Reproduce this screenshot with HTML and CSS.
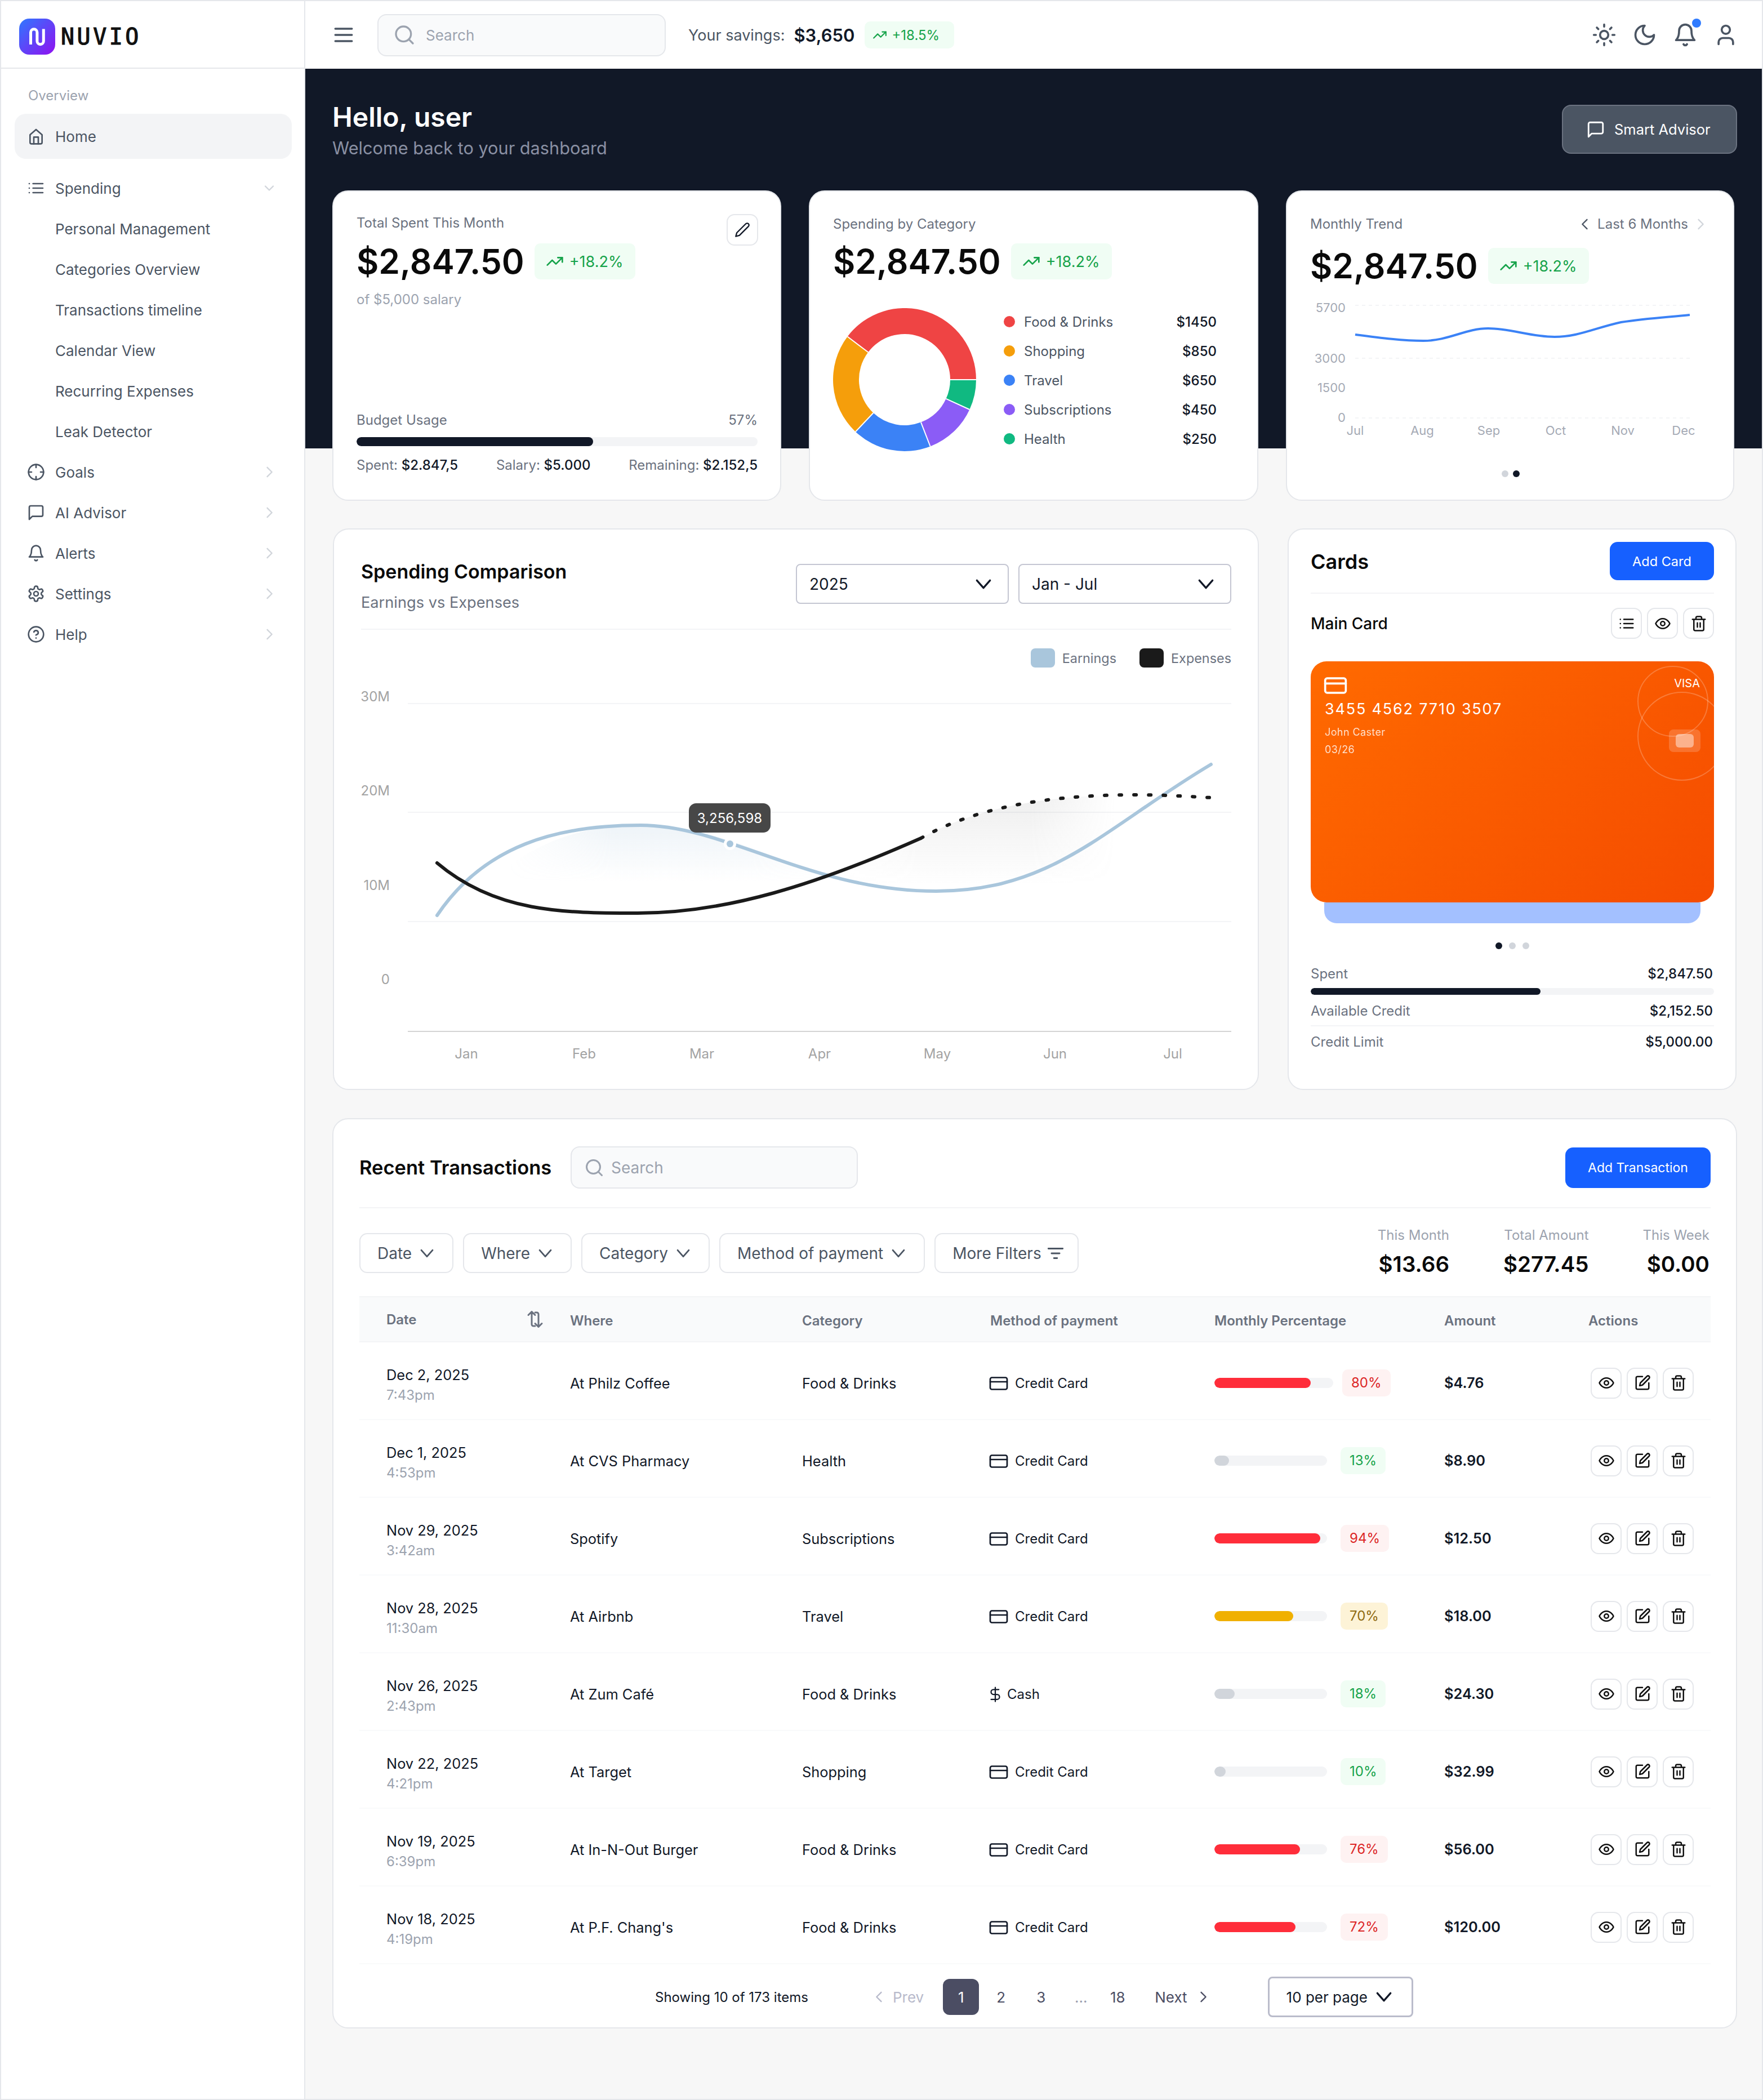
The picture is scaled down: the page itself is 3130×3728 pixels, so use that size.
FILE: index.html
```html
<!DOCTYPE html>
<html lang="en">
  <head>
    <meta charset="UTF-8" />
    <meta name="viewport" content="width=device-width, initial-scale=1.0" />
    <title>Nuvio Dashboard</title>
    <link rel="stylesheet" href="styles.css">
  </head>
  <body>
    <!-- Icon sprite -->
    <svg class="sprite" xmlns="http://www.w3.org/2000/svg">
      <symbol id="i-home" viewBox="0 0 24 24"><path d="M4 10l8-7 8 7v10a2 2 0 0 1-2 2H6a2 2 0 0 1-2-2z"/><path d="M9 22v-9h6v9"/></symbol>
      <symbol id="i-list" viewBox="0 0 24 24"><path d="M8 6h13M8 12h13M8 18h13M3 6h.01M3 12h.01M3 18h.01"/></symbol>
      <symbol id="i-down" viewBox="0 0 24 24"><path d="M6 9l6 6 6-6"/></symbol>
      <symbol id="i-chev" viewBox="0 0 24 24"><path d="M5 8l7 8 7-8"/></symbol>
      <symbol id="i-right" viewBox="0 0 24 24"><path d="M9 5l7 7-7 7"/></symbol>
      <symbol id="i-left" viewBox="0 0 24 24"><path d="M15 5l-7 7 7 7"/></symbol>
      <symbol id="i-goal" viewBox="0 0 24 24"><circle cx="12" cy="12" r="10"/><path d="M22 12h-4M6 12H2M12 6V2M12 22v-4"/></symbol>
      <symbol id="i-chat" viewBox="0 0 24 24"><path d="M21 15a2 2 0 0 1-2 2H7l-4 4V5a2 2 0 0 1 2-2h14a2 2 0 0 1 2 2z"/></symbol>
      <symbol id="i-bell" viewBox="0 0 24 24"><path d="M6 8a6 6 0 0 1 12 0c0 7 3 9 3 9H3s3-2 3-9"/><path d="M10.3 21a1.94 1.94 0 0 0 3.4 0"/></symbol>
      <symbol id="i-gear" viewBox="0 0 24 24"><path d="M12.22 2h-.44a2 2 0 0 0-2 2v.18a2 2 0 0 1-1 1.73l-.43.25a2 2 0 0 1-2 0l-.15-.08a2 2 0 0 0-2.73.73l-.22.38a2 2 0 0 0 .73 2.73l.15.1a2 2 0 0 1 1 1.72v.51a2 2 0 0 1-1 1.74l-.15.09a2 2 0 0 0-.73 2.73l.22.38a2 2 0 0 0 2.73.73l.15-.08a2 2 0 0 1 2 0l.43.25a2 2 0 0 1 1 1.73V20a2 2 0 0 0 2 2h.44a2 2 0 0 0 2-2v-.18a2 2 0 0 1 1-1.73l.43-.25a2 2 0 0 1 2 0l.15.08a2 2 0 0 0 2.73-.73l.22-.39a2 2 0 0 0-.73-2.73l-.15-.08a2 2 0 0 1-1-1.74v-.5a2 2 0 0 1 1-1.74l.15-.09a2 2 0 0 0 .73-2.73l-.22-.38a2 2 0 0 0-2.73-.73l-.15.08a2 2 0 0 1-2 0l-.43-.25a2 2 0 0 1-1-1.73V4a2 2 0 0 0-2-2z"/><circle cx="12" cy="12" r="3"/></symbol>
      <symbol id="i-help" viewBox="0 0 24 24"><circle cx="12" cy="12" r="10"/><path d="M9.09 9a3 3 0 0 1 5.83 1c0 2-3 3-3 3M12 17h.01"/></symbol>
      <symbol id="i-menu" viewBox="0 0 24 24"><path d="M4 6h16M4 12h16M4 18h16"/></symbol>
      <symbol id="i-search" viewBox="0 0 24 24"><circle cx="11" cy="11" r="8"/><path d="M21 21l-4.3-4.3"/></symbol>
      <symbol id="i-trend" viewBox="0 0 24 24"><path d="M22 7l-8.5 8.5-5-5L2 17"/><path d="M16 7h6v6"/></symbol>
      <symbol id="i-sun" viewBox="0 0 24 24"><circle cx="12" cy="12" r="4"/><path d="M12 2v2M12 20v2M4.93 4.93l1.41 1.41M17.66 17.66l1.41 1.41M2 12h2M20 12h2M6.34 17.66l-1.41 1.41M19.07 4.93l-1.41 1.41"/></symbol>
      <symbol id="i-moon" viewBox="0 0 24 24"><path d="M12 3a6 6 0 0 0 9 9 9 9 0 1 1-9-9z"/></symbol>
      <symbol id="i-user" viewBox="0 0 24 24"><circle cx="12" cy="7" r="4"/><path d="M19 21v-2a4 4 0 0 0-4-4H9a4 4 0 0 0-4 4v2"/></symbol>
      <symbol id="i-pencil" viewBox="0 0 24 24"><path d="M17 3a2.85 2.83 0 1 1 4 4L7.5 20.5 2 22l1.5-5.5z"/></symbol>
      <symbol id="i-card" viewBox="0 0 24 24"><rect x="2" y="5" width="20" height="14" rx="2"/><path d="M2 10h20"/></symbol>
      <symbol id="i-eye" viewBox="0 0 24 24"><path d="M2 12s3-7 10-7 10 7 10 7-3 7-10 7-10-7-10-7z"/><circle cx="12" cy="12" r="3"/></symbol>
      <symbol id="i-edit" viewBox="0 0 24 24"><path d="M12 3H5a2 2 0 0 0-2 2v14a2 2 0 0 0 2 2h14a2 2 0 0 0 2-2v-7"/><path d="M18.4 2.6a2.1 2.1 0 1 1 3 3L12 15l-4 1 1-4z"/></symbol>
      <symbol id="i-trash" viewBox="0 0 24 24"><path d="M3 6h18M19 6v14a2 2 0 0 1-2 2H7a2 2 0 0 1-2-2V6M8 6V4a2 2 0 0 1 2-2h4a2 2 0 0 1 2 2v2M10 11v6M14 11v6"/></symbol>
      <symbol id="i-filter" viewBox="0 0 24 24"><path d="M3 6h18M7 12h10M10 18h4"/></symbol>
      <symbol id="i-sort" viewBox="0 0 24 24"><path d="M4 7l4-4M8 3l4 4M8 3v15a2 2 0 0 0 2 2h2M20 17l-4 4M16 21l-4-4M16 21V6a2 2 0 0 0-2-2h-2"/></symbol>
      <symbol id="i-dollar" viewBox="0 0 24 24"><path d="M12 2v20M17 5H9.5a3.5 3.5 0 0 0 0 7h5a3.5 3.5 0 0 1 0 7H6"/></symbol>
    </svg>

    <div class="app">
      <!-- Sidebar -->
      <aside class="sidebar">
        <div class="logo">
          <svg class="logo-mark" viewBox="0 0 64 64">
            <defs>
              <linearGradient id="logoFill" x1="0" y1="0" x2="1" y2="1">
                <stop offset="0" stop-color="#2f78ff" />
                <stop offset="1" stop-color="#9010f0" />
              </linearGradient>
            </defs>
            <rect width="64" height="64" rx="18" fill="url(#logoFill)" />
            <path d="M20.500 46V24.500a5.700 5.700 0 0 1 11.400 0V40a5.700 5.700 0 0 0 11.400 0V18.500" fill="none" stroke="#fff" stroke-width="5" />
          </svg>
          <span class="logo-text">NUVIO</span>
        </div>
        <nav class="nav">
          <div class="nav-label">Overview</div>
          <a class="nav-item active"><svg class="ic ic-nav"><use href="#i-home" /></svg>Home</a>
          <a class="nav-item spaced"><svg class="ic ic-nav"><use href="#i-list" /></svg>Spending<svg class="ic nav-chev"><use href="#i-down" /></svg></a>
          <a class="nav-item sub">Personal Management</a>
          <a class="nav-item sub">Categories Overview</a>
          <a class="nav-item sub">Transactions timeline</a>
          <a class="nav-item sub">Calendar View</a>
          <a class="nav-item sub">Recurring Expenses</a>
          <a class="nav-item sub">Leak Detector</a>
          <a class="nav-item"><svg class="ic ic-nav"><use href="#i-goal" /></svg>Goals<svg class="ic nav-chev"><use href="#i-right" /></svg></a>
          <a class="nav-item"><svg class="ic ic-nav"><use href="#i-chat" /></svg>AI Advisor<svg class="ic nav-chev"><use href="#i-right" /></svg></a>
          <a class="nav-item"><svg class="ic ic-nav"><use href="#i-bell" /></svg>Alerts<svg class="ic nav-chev"><use href="#i-right" /></svg></a>
          <a class="nav-item"><svg class="ic ic-nav"><use href="#i-gear" /></svg>Settings<svg class="ic nav-chev"><use href="#i-right" /></svg></a>
          <a class="nav-item"><svg class="ic ic-nav"><use href="#i-help" /></svg>Help<svg class="ic nav-chev"><use href="#i-right" /></svg></a>
        </nav>
      </aside>

      <main class="main">
        <!-- Top bar -->
        <header class="topbar">
          <svg class="ic ic-menu"><use href="#i-menu" /></svg>
          <div class="search search-top">
            <svg class="ic ic-search"><use href="#i-search" /></svg>
            <span>Search</span>
          </div>
          <span class="savings-label">Your savings:</span>
          <span class="savings-value">$3,650</span>
          <span class="trend trend-small"><svg class="ic"><use href="#i-trend" /></svg>+18.5%</span>
          <div class="top-icons">
            <svg class="ic ic-top"><use href="#i-sun" /></svg>
            <svg class="ic ic-top"><use href="#i-moon" /></svg>
            <span class="bell-wrap"><svg class="ic ic-top"><use href="#i-bell" /></svg><span class="bell-dot"></span></span>
            <svg class="ic ic-top"><use href="#i-user" /></svg>
          </div>
        </header>

        <section class="hero">
          <div>
            <h1>Hello, user</h1>
            <p>Welcome back to your dashboard</p>
          </div>
          <button class="advisor-btn"><svg class="ic"><use href="#i-chat" /></svg>Smart Advisor</button>
        </section>

        <div class="content">
          <!-- Summary cards -->
          <div class="summary-row">
            <section class="card summary budget">
              <button class="edit-btn"><svg class="ic"><use href="#i-pencil" /></svg></button>
              <div class="card-label first">Total Spent This Month</div>
              <div class="amount-row">
                <span class="amount">$2,847.50</span>
                <span class="trend"><svg class="ic"><use href="#i-trend" /></svg>+18.2%</span>
              </div>
              <div class="salary-note">of $5,000 salary</div>
              <div class="budget-bottom">
                <div class="budget-head"><span>Budget Usage</span><span>57%</span></div>
                <div class="progress budget-bar"><div class="progress-fill budget-fill"></div></div>
                <div class="budget-foot">
                  <span>Spent: <b>$2.847,5</b></span>
                  <span>Salary: <b>$5.000</b></span>
                  <span>Remaining: <b>$2.152,5</b></span>
                </div>
              </div>
            </section>

            <section class="card summary">
              <div class="card-label">Spending by Category</div>
              <div class="amount-row">
                <span class="amount">$2,847.50</span>
                <span class="trend"><svg class="ic"><use href="#i-trend" /></svg>+18.2%</span>
              </div>
              <div class="category-body">
                <svg class="donut" viewBox="-127 -127 254 254">
                  <path fill="#ef4444" d="M127 0A127 127 0 0 0 -101.400 -76.500L-64.700 -48.800A81 81 0 0 1 81 0Z" />
                  <path fill="#f59e0b" d="M-101.400 -76.500A127 127 0 0 0 -87.100 92.400L-55.500 59A81 81 0 0 1 -64.700 -48.800Z" />
                  <path fill="#3b82f6" d="M-87.100 92.400A127 127 0 0 0 45.600 118.500L29 75.600A81 81 0 0 1 -55.500 59Z" />
                  <path fill="#8b5cf6" d="M45.600 118.500A127 127 0 0 0 115.400 53L73.600 33.800A81 81 0 0 1 29 75.600Z" />
                  <path fill="#10b981" d="M115.400 53A127 127 0 0 0 127 0L81 0A81 81 0 0 1 73.600 33.800Z" />
                  <g stroke="#fff" stroke-width="2">
                    <path d="M127 0H81M-101.400 -76.500L-64.700 -48.800M-87.100 92.400L-55.500 59M45.600 118.500L29 75.600M115.400 53L73.600 33.800" />
                  </g>
                </svg>
                <ul class="category-list">
                  <li><span class="dot dot-red"></span><span class="cat-name">Food &amp; Drinks</span><b>$1450</b></li>
                  <li><span class="dot dot-orange"></span><span class="cat-name">Shopping</span><b>$850</b></li>
                  <li><span class="dot dot-blue"></span><span class="cat-name">Travel</span><b>$650</b></li>
                  <li><span class="dot dot-purple"></span><span class="cat-name">Subscriptions</span><b>$450</b></li>
                  <li><span class="dot dot-green"></span><span class="cat-name">Health</span><b>$250</b></li>
                </ul>
              </div>
            </section>

            <section class="card summary trend-card">
              <div class="trend-head">
                <div class="card-label">Monthly Trend</div>
                <div class="period">
                  <svg class="ic period-prev"><use href="#i-left" /></svg>
                  <span>Last 6 Months</span>
                  <svg class="ic period-next"><use href="#i-right" /></svg>
                </div>
              </div>
              <div class="amount-row wide">
                <span class="amount">$2,847.50</span>
                <span class="trend"><svg class="ic"><use href="#i-trend" /></svg>+18.2%</span>
              </div>
              <svg class="mini-chart" viewBox="2324 520 720 260">
                <g class="mini-grid">
                  <path d="M2404 542H3000M2404 636H3000M2404 742H3000" />
                </g>
                <g class="mini-axis" text-anchor="end">
                  <text x="2387" y="554">5700</text>
                  <text x="2387" y="644">3000</text>
                  <text x="2387" y="696">1500</text>
                  <text x="2387" y="749">0</text>
                </g>
                <g class="mini-axis" text-anchor="middle">
                  <text x="2404" y="772">Jul</text>
                  <text x="2523" y="772">Aug</text>
                  <text x="2641" y="772">Sep</text>
                  <text x="2760" y="772">Oct</text>
                  <text x="2879" y="772">Nov</text>
                  <text x="2987" y="772">Dec</text>
                </g>
                <path class="mini-line" d="M2404 594C2450 600 2490 605 2525 605C2570 605 2600 583 2640 583C2680 583 2715 598 2758 598C2800 598 2830 582 2876 572C2920 565 2960 563 2998 559" />
              </svg>
              <div class="pager-dots">
                <span class="pdot"></span><span class="pdot on"></span>
              </div>
            </section>
          </div>

          <!-- Chart and cards -->
          <div class="middle-row">
            <section class="card chart-card">
              <div class="chart-head">
                <div>
                  <h2>Spending Comparison</h2>
                  <div class="chart-sub">Earnings vs Expenses</div>
                </div>
                <div class="chart-selects">
                  <div class="select">2025<svg class="ic"><use href="#i-chev" /></svg></div>
                  <div class="select">Jan - Jul<svg class="ic"><use href="#i-chev" /></svg></div>
                </div>
              </div>
              <div class="chart-legend">
                <span class="swatch swatch-earn"></span><span>Earnings</span>
                <span class="swatch swatch-exp"></span><span>Expenses</span>
              </div>
              <svg class="big-chart" viewBox="641 1190 1545 700">
                <defs>
                  <linearGradient id="blueFade" gradientUnits="userSpaceOnUse" x1="0" y1="1465" x2="0" y2="1565">
                    <stop offset="0" stop-color="#a9c6dc" stop-opacity="0.2" />
                    <stop offset="1" stop-color="#a9c6dc" stop-opacity="0" />
                  </linearGradient>
                  <linearGradient id="grayFade" gradientUnits="userSpaceOnUse" x1="0" y1="1420" x2="0" y2="1570">
                    <stop offset="0" stop-color="#8a8a8a" stop-opacity="0.14" />
                    <stop offset="1" stop-color="#8a8a8a" stop-opacity="0" />
                  </linearGradient>
                  <linearGradient id="sideFade" x1="0" y1="0" x2="1" y2="0">
                    <stop offset="0" stop-color="#000" />
                    <stop offset="0.3" stop-color="#fff" />
                    <stop offset="0.7" stop-color="#fff" />
                    <stop offset="1" stop-color="#000" />
                  </linearGradient>
                  <mask id="blueMask"><rect x="900" y="1440" width="620" height="160" fill="url(#sideFade)" /></mask>
                  <mask id="grayMask"><rect x="1480" y="1400" width="500" height="180" fill="url(#sideFade)" /></mask>
                </defs>
                <g class="big-grid">
                  <path d="M724 1249H2186M724 1442H2186M724 1636H2186" />
                </g>
                <path class="big-axis-line" d="M724 1831H2186" />
                <g class="big-axis" text-anchor="end">
                  <text x="692" y="1245">30M</text>
                  <text x="692" y="1412">20M</text>
                  <text x="692" y="1580">10M</text>
                  <text x="692" y="1747">0</text>
                </g>
                <g class="big-axis" text-anchor="middle">
                  <text x="828" y="1879">Jan</text>
                  <text x="1037" y="1879">Feb</text>
                  <text x="1246" y="1879">Mar</text>
                  <text x="1455" y="1879">Apr</text>
                  <text x="1664" y="1879">May</text>
                  <text x="1873" y="1879">Jun</text>
                  <text x="2082" y="1879">Jul</text>
                </g>
                <path fill="url(#blueFade)" mask="url(#blueMask)" d="M900 1540C980 1480 1060 1465 1137 1465C1290 1465 1400 1545 1520 1570V1600H900Z" />
                <path fill="url(#grayFade)" mask="url(#grayMask)" d="M1480 1553C1540 1520 1600 1508 1635 1488C1720 1440 1840 1411 2016 1411V1580H1480Z" />
                <path class="line-earn" d="M776 1625C860 1500 990 1465 1137 1465C1290 1465 1440 1582 1662 1582C1870 1582 1960 1470 2150 1357" />
                <path class="line-exp" d="M776 1532C880 1620 1000 1621 1132 1621C1290 1621 1450 1570 1635 1488" />
                <path class="line-exp dotted" d="M1635 1488C1720 1440 1840 1411 2016 1411C2070 1411 2110 1414 2150 1416" />
                <circle cx="1296" cy="1498" r="11" fill="#fff" />
                <circle cx="1296" cy="1498" r="6" fill="#a9c6dc" />
                <rect x="1223" y="1426" width="145" height="52" rx="13" fill="#474747" />
                <text class="tip-text" x="1295.500" y="1461" text-anchor="middle">3,256,598</text>
              </svg>
            </section>

            <section class="card cards-card">
              <div class="cards-head">
                <h2>Cards</h2>
                <button class="primary-btn add-card">Add Card</button>
              </div>
              <div class="main-card-row">
                <span>Main Card</span>
                <div class="icon-btns">
                  <button class="icon-btn"><svg class="ic"><use href="#i-list" /></svg></button>
                  <button class="icon-btn"><svg class="ic"><use href="#i-eye" /></svg></button>
                  <button class="icon-btn"><svg class="ic"><use href="#i-trash" /></svg></button>
                </div>
              </div>
              <div class="credit-card">
                <span class="ring ring-one"></span>
                <span class="ring ring-two"></span>
                <span class="visa">VISA</span>
                <span class="chip"><span class="chip-core"></span></span>
                <svg class="ic cc-icon"><use href="#i-card" /></svg>
                <div class="cc-number">3455 4562 7710 3507</div>
                <div class="cc-name">John Caster</div>
                <div class="cc-date">03/26</div>
              </div>
              <div class="card-back"></div>
              <div class="pager-dots card-dots">
                <span class="pdot on"></span><span class="pdot"></span><span class="pdot"></span>
              </div>
              <div class="credit-row first"><span>Spent</span><b>$2,847.50</b></div>
              <div class="progress credit-bar"><div class="progress-fill credit-fill"></div></div>
              <div class="credit-row divided"><span>Available Credit</span><b>$2,152.50</b></div>
              <div class="credit-row"><span>Credit Limit</span><b>$5,000.00</b></div>
            </section>
          </div>

          <!-- Transactions -->
          <section class="card tx-card">
            <div class="tx-head">
              <h2>Recent Transactions</h2>
              <div class="search search-tx">
                <svg class="ic ic-search"><use href="#i-search" /></svg>
                <span>Search</span>
              </div>
              <button class="primary-btn add-tx">Add Transaction</button>
            </div>

            <div class="tx-tools">
              <div class="filters">
                <button class="filter">Date<svg class="ic"><use href="#i-chev" /></svg></button>
                <button class="filter">Where<svg class="ic"><use href="#i-chev" /></svg></button>
                <button class="filter">Category<svg class="ic"><use href="#i-chev" /></svg></button>
                <button class="filter">Method of payment<svg class="ic"><use href="#i-chev" /></svg></button>
                <button class="filter filter-more">More Filters<svg class="ic"><use href="#i-filter" /></svg></button>
              </div>
              <div class="tx-stats">
                <div class="tx-stat"><span>This Month</span><b>$13.66</b></div>
                <div class="tx-stat"><span>Total Amount</span><b>$277.45</b></div>
                <div class="tx-stat"><span>This Week</span><b>$0.00</b></div>
              </div>
            </div>

            <div class="tx-table">
              <div class="tx-row tx-header">
                <div class="col-date">Date<svg class="ic ic-sort"><use href="#i-sort" /></svg></div>
                <div>Where</div>
                <div>Category</div>
                <div>Method of payment</div>
                <div>Monthly Percentage</div>
                <div>Amount</div>
                <div>Actions</div>
              </div>

              <div class="tx-row">
                <div class="date-cell">Dec 2, 2025<small>7:43pm</small></div>
                <div>At Philz Coffee</div>
                <div>Food &amp; Drinks</div>
                <div class="method"><svg class="ic"><use href="#i-card" /></svg>Credit Card</div>
                <div class="pct"><div class="track track-wide"><div class="track-fill red" style="width: 81%"></div></div><span class="pct-badge bad">80%</span></div>
                <div class="tx-amount">$4.76</div>
                <div class="actions"><button class="icon-btn"><svg class="ic"><use href="#i-eye" /></svg></button><button class="icon-btn"><svg class="ic"><use href="#i-edit" /></svg></button><button class="icon-btn"><svg class="ic"><use href="#i-trash" /></svg></button></div>
              </div>
              <div class="tx-row">
                <div class="date-cell">Dec 1, 2025<small>4:53pm</small></div>
                <div>At CVS Pharmacy</div>
                <div>Health</div>
                <div class="method"><svg class="ic"><use href="#i-card" /></svg>Credit Card</div>
                <div class="pct"><div class="track"><div class="track-fill gray" style="width: 13%"></div></div><span class="pct-badge good">13%</span></div>
                <div class="tx-amount">$8.90</div>
                <div class="actions"><button class="icon-btn"><svg class="ic"><use href="#i-eye" /></svg></button><button class="icon-btn"><svg class="ic"><use href="#i-edit" /></svg></button><button class="icon-btn"><svg class="ic"><use href="#i-trash" /></svg></button></div>
              </div>
              <div class="tx-row">
                <div class="date-cell">Nov 29, 2025<small>3:42am</small></div>
                <div>Spotify</div>
                <div>Subscriptions</div>
                <div class="method"><svg class="ic"><use href="#i-card" /></svg>Credit Card</div>
                <div class="pct"><div class="track"><div class="track-fill red" style="width: 94%"></div></div><span class="pct-badge bad">94%</span></div>
                <div class="tx-amount">$12.50</div>
                <div class="actions"><button class="icon-btn"><svg class="ic"><use href="#i-eye" /></svg></button><button class="icon-btn"><svg class="ic"><use href="#i-edit" /></svg></button><button class="icon-btn"><svg class="ic"><use href="#i-trash" /></svg></button></div>
              </div>
              <div class="tx-row">
                <div class="date-cell">Nov 28, 2025<small>11:30am</small></div>
                <div>At Airbnb</div>
                <div>Travel</div>
                <div class="method"><svg class="ic"><use href="#i-card" /></svg>Credit Card</div>
                <div class="pct"><div class="track"><div class="track-fill amber" style="width: 70%"></div></div><span class="pct-badge warn">70%</span></div>
                <div class="tx-amount">$18.00</div>
                <div class="actions"><button class="icon-btn"><svg class="ic"><use href="#i-eye" /></svg></button><button class="icon-btn"><svg class="ic"><use href="#i-edit" /></svg></button><button class="icon-btn"><svg class="ic"><use href="#i-trash" /></svg></button></div>
              </div>
              <div class="tx-row">
                <div class="date-cell">Nov 26, 2025<small>2:43pm</small></div>
                <div>At Zum Café</div>
                <div>Food &amp; Drinks</div>
                <div class="method method-cash"><svg class="ic"><use href="#i-dollar" /></svg>Cash</div>
                <div class="pct"><div class="track"><div class="track-fill gray" style="width: 18%"></div></div><span class="pct-badge good">18%</span></div>
                <div class="tx-amount">$24.30</div>
                <div class="actions"><button class="icon-btn"><svg class="ic"><use href="#i-eye" /></svg></button><button class="icon-btn"><svg class="ic"><use href="#i-edit" /></svg></button><button class="icon-btn"><svg class="ic"><use href="#i-trash" /></svg></button></div>
              </div>
              <div class="tx-row">
                <div class="date-cell">Nov 22, 2025<small>4:21pm</small></div>
                <div>At Target</div>
                <div>Shopping</div>
                <div class="method"><svg class="ic"><use href="#i-card" /></svg>Credit Card</div>
                <div class="pct"><div class="track"><div class="track-fill gray" style="width: 10%"></div></div><span class="pct-badge good">10%</span></div>
                <div class="tx-amount">$32.99</div>
                <div class="actions"><button class="icon-btn"><svg class="ic"><use href="#i-eye" /></svg></button><button class="icon-btn"><svg class="ic"><use href="#i-edit" /></svg></button><button class="icon-btn"><svg class="ic"><use href="#i-trash" /></svg></button></div>
              </div>
              <div class="tx-row">
                <div class="date-cell">Nov 19, 2025<small>6:39pm</small></div>
                <div>At In-N-Out Burger</div>
                <div>Food &amp; Drinks</div>
                <div class="method"><svg class="ic"><use href="#i-card" /></svg>Credit Card</div>
                <div class="pct"><div class="track"><div class="track-fill red" style="width: 76%"></div></div><span class="pct-badge bad">76%</span></div>
                <div class="tx-amount">$56.00</div>
                <div class="actions"><button class="icon-btn"><svg class="ic"><use href="#i-eye" /></svg></button><button class="icon-btn"><svg class="ic"><use href="#i-edit" /></svg></button><button class="icon-btn"><svg class="ic"><use href="#i-trash" /></svg></button></div>
              </div>
              <div class="tx-row">
                <div class="date-cell">Nov 18, 2025<small>4:19pm</small></div>
                <div>At P.F. Chang's</div>
                <div>Food &amp; Drinks</div>
                <div class="method"><svg class="ic"><use href="#i-card" /></svg>Credit Card</div>
                <div class="pct"><div class="track"><div class="track-fill red" style="width: 72%"></div></div><span class="pct-badge bad">72%</span></div>
                <div class="tx-amount">$120.00</div>
                <div class="actions"><button class="icon-btn"><svg class="ic"><use href="#i-eye" /></svg></button><button class="icon-btn"><svg class="ic"><use href="#i-edit" /></svg></button><button class="icon-btn"><svg class="ic"><use href="#i-trash" /></svg></button></div>
              </div>
            </div>

            <div class="tx-foot">
              <span class="showing">Showing 10 of 173 items</span>
              <div class="pagination">
                <span class="pg-prev"><svg class="ic"><use href="#i-left" /></svg>Prev</span>
                <span class="pg active">1</span>
                <span class="pg">2</span>
                <span class="pg">3</span>
                <span class="pg muted">...</span>
                <span class="pg pg-last">18</span>
                <span class="pg-next">Next<svg class="ic"><use href="#i-right" /></svg></span>
              </div>
              <div class="select per-page">10 per page<svg class="ic"><use href="#i-chev" /></svg></div>
            </div>
          </section>
        </div>
      </main>
    </div>
  </body>
</html>
```

FILE: styles.css
```css
* {
  box-sizing: border-box;
}

body {
  margin: 0;
  font-family: "Inter", "Liberation Sans", sans-serif;
  color: #111827;
  background-color: #f7f7f7;
}

h1,
h2,
p,
ul {
  margin: 0;
  padding: 0;
}

button {
  font-family: inherit;
  cursor: pointer;
}

.sprite {
  display: none;
}

.ic {
  fill: none;
  stroke: currentColor;
  stroke-width: 2;
  stroke-linecap: round;
  stroke-linejoin: round;
  flex-shrink: 0;
}

.app {
  display: flex;
  width: 3130px;
  height: 3728px;
  border: 2px solid #e5e7eb;
}

/* Sidebar */
.sidebar {
  width: 540px;
  flex-shrink: 0;
  background-color: #fff;
  border-right: 2px solid #e5e7eb;
}

.logo {
  display: flex;
  align-items: center;
  height: 120px;
  padding: 8px 0 0 32px;
  gap: 10px;
  border-bottom: 2px solid #e5e7eb;
}

.logo-mark {
  width: 64px;
  height: 64px;
}

.logo-text {
  font-family: "DejaVu Sans Mono", monospace;
  font-size: 40px;
  letter-spacing: 4.500px;
  color: #111;
  -webkit-text-stroke: 1.200px #111;
}

.nav {
  padding: 33px 0 0;
}

.nav-label {
  height: 30px;
  line-height: 30px;
  padding-left: 48px;
  font-size: 24px;
  color: #9ca3af;
  margin-bottom: 17px;
}

.nav-item {
  display: flex;
  align-items: center;
  height: 72px;
  padding-left: 46px;
  padding-right: 48px;
  font-size: 26px;
  color: #4b5563;
  gap: 17px;
}

.nav-item.active {
  height: 80px;
  margin: 0 22px 0 24px;
  padding-left: 22px;
  background-color: #f3f4f6;
  border-radius: 20px;
}

.nav-item.spaced {
  margin-top: 16px;
}

.nav-item.sub {
  padding-left: 96px;
}

.ic-nav {
  width: 32px;
  height: 32px;
  margin-right: 1px;
}

.nav-chev {
  width: 28px;
  height: 28px;
  margin-left: auto;
  color: #d1d5db;
}

/* Main */
.main {
  flex: 1;
  min-width: 0;
}

.topbar {
  display: flex;
  align-items: center;
  height: 120px;
  padding: 0 42px 0 46px;
  background-color: #fff;
}

.ic-menu {
  width: 44px;
  height: 44px;
  margin-right: 38px;
  color: #4b5563;
}

.search {
  display: flex;
  align-items: center;
  height: 75px;
  background-color: #f9fafb;
  border: 2px solid #e5e7eb;
  border-radius: 16px;
  font-size: 26px;
  color: #9ca3af;
}

.search-top {
  width: 512px;
  padding-left: 26px;
  gap: 18px;
  margin-right: 40px;
}

.ic-search {
  width: 40px;
  height: 40px;
}

.savings-label {
  font-size: 27px;
  color: #4b5563;
  margin-right: 16px;
}

.savings-value {
  font-size: 31px;
  font-weight: 600;
  margin-right: 18px;
}

.trend {
  display: inline-flex;
  align-items: center;
  gap: 10px;
  height: 64px;
  padding: 0 22px 0 20px;
  background-color: #f0fdf4;
  border-radius: 10px;
  font-size: 27px;
  color: #16a34a;
}

.trend svg {
  width: 32px;
  height: 32px;
}

.trend-small {
  height: 48px;
  padding: 0 26px 0 14px;
  gap: 8px;
  font-size: 24px;
}

.trend-small svg {
  width: 26px;
  height: 26px;
}

.top-icons {
  display: flex;
  align-items: center;
  gap: 28px;
  margin-left: auto;
  color: #4b5563;
}

.ic-top {
  display: block;
  width: 44px;
  height: 44px;
}

.bell-wrap {
  position: relative;
  display: block;
}

.bell-dot {
  position: absolute;
  top: -7px;
  right: -6px;
  width: 16px;
  height: 16px;
  border-radius: 50%;
  background-color: #2f7bff;
}

/* Hero */
.hero {
  display: flex;
  justify-content: space-between;
  align-items: flex-start;
  height: 674px;
  padding: 58px 44px 0 48px;
  background-color: #111827;
}

.hero h1 {
  font-size: 48px;
  line-height: 56px;
  font-weight: 600;
  color: #fff;
}

.hero p {
  margin-top: 7px;
  font-size: 30.700px;
  line-height: 40px;
  color: #8a90a3;
}

.advisor-btn {
  display: flex;
  align-items: center;
  gap: 16px;
  width: 311px;
  height: 87px;
  margin-top: 6px;
  padding-left: 41px;
  background-color: #4b5563;
  border: 2px solid #6b7280;
  border-radius: 16px;
  font-size: 25.500px;
  color: #fff;
}

.advisor-btn svg {
  width: 34px;
  height: 34px;
}

.content {
  margin-top: -458px;
  padding: 0 44px 0 48px;
}

/* Cards */
.card {
  position: relative;
  background-color: #fff;
  border: 2px solid #e5e7eb;
  border-radius: 28px;
}

.summary-row {
  display: grid;
  grid-template-columns: 797px 798px 796px;
  grid-template-rows: 551px;
  column-gap: 49px;
}

.summary {
  display: flex;
  flex-direction: column;
  padding: 44px 40px 47px 41px;
}

.card-label {
  font-size: 24px;
  line-height: 28px;
  color: #6b7280;
}

.card-label.first {
  margin-top: -2px;
}

.amount-row {
  display: flex;
  align-items: center;
  gap: 18px;
  margin-top: 20px;
}

.amount-row.wide {
  margin-top: 28px;
}

.amount {
  font-size: 60.500px;
  line-height: 64px;
  font-weight: 600;
  color: #0a0a0a;
}

.budget .amount-row {
  margin-top: 22px;
}

.salary-note {
  margin-top: 22px;
  font-size: 24px;
  line-height: 28px;
  color: #9ca3af;
}

.edit-btn {
  position: absolute;
  top: 40px;
  right: 39px;
  width: 56px;
  height: 56px;
  padding: 0;
  display: flex;
  align-items: center;
  justify-content: center;
  background-color: #fff;
  border: 2px solid #e5e7eb;
  border-radius: 14px;
  color: #111827;
}

.edit-btn svg {
  width: 28px;
  height: 28px;
}

.budget-bottom {
  margin-top: auto;
}

.budget-head,
.budget-foot {
  display: flex;
  justify-content: space-between;
  font-size: 24px;
  line-height: 28px;
  color: #6b7280;
}

.budget-foot {
  margin-top: 20px;
}

.budget-foot b {
  font-weight: 500;
  color: #111827;
}

.progress {
  background-color: #f3f4f6;
  border-radius: 8px;
  overflow: hidden;
}

.progress-fill {
  height: 100%;
  background-color: #111827;
  border-radius: 8px;
}

.budget-bar {
  height: 16px;
  margin-top: 16px;
}

.budget-fill {
  width: 59%;
}

.category-body {
  display: flex;
  margin-top: 51px;
  gap: 49px;
}

.donut {
  width: 254px;
  height: 254px;
  flex-shrink: 0;
}

.category-list {
  list-style: none;
  width: 378px;
  margin-top: -2px;
}

.category-list li {
  display: flex;
  align-items: center;
  height: 52px;
  font-size: 24px;
}

.category-list b {
  margin-left: auto;
  font-weight: 500;
}

.cat-name {
  margin-left: 16px;
  color: #4b5563;
}

.dot {
  width: 20px;
  height: 20px;
  border-radius: 50%;
}

.dot-red { background-color: #ef4444; }
.dot-orange { background-color: #f59e0b; }
.dot-blue { background-color: #3b82f6; }
.dot-purple { background-color: #8b5cf6; }
.dot-green { background-color: #10b981; }

.trend-head {
  display: flex;
  justify-content: space-between;
  align-items: center;
}

.period {
  display: flex;
  align-items: center;
  gap: 8px;
  font-size: 24px;
  line-height: 28px;
  color: #6b7280;
  margin-right: 4px;
}

.period svg {
  width: 28px;
  height: 28px;
}

.period-prev {
  color: #4b5563;
}

.period-next {
  color: #d1d5db;
}

.mini-chart {
  display: block;
  flex-shrink: 0;
  width: 720px;
  height: 260px;
  margin-top: 16px;
}

.mini-grid path {
  fill: none;
  stroke: #f3f4f6;
  stroke-width: 2;
  stroke-dasharray: 6 6;
}

.mini-axis {
  font-size: 22px;
  fill: #a5aab5;
}

.mini-line {
  fill: none;
  stroke: #3b82f6;
  stroke-width: 4;
}

.pager-dots {
  display: flex;
  flex-shrink: 0;
  justify-content: center;
  gap: 8px;
  margin-top: 55px;
}

.pdot {
  width: 12px;
  height: 12px;
  border-radius: 50%;
  background-color: #d1d5db;
}

.pdot.on {
  background-color: #111827;
}

.middle-row {
  display: grid;
  grid-template-columns: 1644px 797px;
  grid-template-rows: 997px;
  column-gap: 51px;
  margin-top: 49px;
  margin-left: 1px;
}

/* Chart card */
.chart-card {
  padding: 53px 47px 0 48px;
}

.chart-head {
  display: flex;
  justify-content: space-between;
  align-items: flex-start;
  padding-bottom: 26px;
  border-bottom: 2px solid #f3f4f6;
}

.chart-card h2 {
  font-size: 34px;
  line-height: 44px;
  font-weight: 600;
  color: #0a0a0a;
}

.chart-sub {
  margin-top: 13px;
  font-size: 27.200px;
  line-height: 40px;
  color: #6b7280;
}

.chart-selects {
  display: flex;
  gap: 17px;
  margin-top: 8px;
}

.select {
  display: flex;
  align-items: center;
  justify-content: space-between;
  width: 378px;
  height: 71px;
  padding: 0 23px 0 22px;
  background-color: #fff;
  border: 2px solid #c4c6d2;
  border-radius: 8px;
  font-size: 28px;
  color: #111827;
}

.select svg {
  width: 40px;
  height: 40px;
}

.chart-legend {
  display: flex;
  justify-content: flex-end;
  align-items: center;
  height: 34px;
  margin-top: 33px;
  font-size: 23.400px;
  color: #6b7280;
}

.swatch {
  width: 43px;
  height: 34px;
  border-radius: 8px;
  margin-right: 13px;
}

.swatch-earn {
  background-color: #a9c6dc;
}

.swatch-exp {
  margin-left: 41px;
  background-color: #1a1a1a;
}

.big-chart {
  display: block;
  width: 1545px;
  height: 700px;
  margin-top: 5px;
}

.big-grid path {
  fill: none;
  stroke: #f3f4f6;
  stroke-width: 2;
}

.big-axis-line {
  fill: none;
  stroke: #d4d4d4;
  stroke-width: 2;
}

.big-axis {
  font-size: 24px;
  fill: #a3a3a3;
}

.line-earn {
  fill: none;
  stroke: #a9c6dc;
  stroke-width: 6;
  stroke-linecap: round;
}

.line-exp {
  fill: none;
  stroke: #1a1a1a;
  stroke-width: 6;
  stroke-linecap: round;
}

.line-exp.dotted {
  stroke-dasharray: 4 22;
}

.tip-text {
  font-size: 24px;
  fill: #fff;
}

/* Cards panel */
.cards-card {
  padding: 22px 38px 0 39px;
}

.cards-head {
  display: flex;
  justify-content: space-between;
  align-items: center;
  padding-bottom: 22px;
  border-bottom: 2px solid #f3f4f6;
}

.cards-head h2 {
  margin-top: 2px;
  font-size: 36px;
  font-weight: 600;
  color: #0a0a0a;
}

.primary-btn {
  border: none;
  border-radius: 14px;
  background-color: #1660ff;
  color: #fff;
  font-size: 23.500px;
}

.add-card {
  width: 185px;
  height: 68px;
}

.main-card-row {
  display: flex;
  justify-content: space-between;
  align-items: center;
  margin-top: 25px;
  font-size: 28px;
  font-weight: 500;
  color: #0a0a0a;
}

.icon-btns,
.actions {
  display: flex;
  gap: 9px;
}

.icon-btn {
  display: flex;
  align-items: center;
  justify-content: center;
  width: 55px;
  height: 55px;
  padding: 0;
  background-color: #fff;
  border: 2px solid #e5e7eb;
  border-radius: 14px;
  color: #111;
}

.icon-btn svg {
  width: 30px;
  height: 30px;
}

.credit-card {
  position: relative;
  height: 428px;
  margin-top: 40px;
  padding: 21px 0 0 25px;
  border-radius: 28px;
  overflow: hidden;
  background: linear-gradient(135deg, #ff6a00, #f54c00);
  color: #fff;
}

.ring {
  position: absolute;
  border: 2px solid rgba(255, 255, 255, 0.22);
  border-radius: 50%;
}

.ring-one {
  left: 580px;
  top: 8px;
  width: 126px;
  height: 126px;
}

.ring-two {
  left: 580px;
  top: 54px;
  width: 158px;
  height: 158px;
}

.visa {
  position: absolute;
  right: 25px;
  top: 25px;
  font-size: 20px;
  line-height: 28px;
}

.chip {
  position: absolute;
  left: 636px;
  top: 121px;
  width: 56px;
  height: 40px;
  padding: 8px 12px;
  border-radius: 8px;
  background-color: rgba(255, 255, 255, 0.18);
}

.chip-core {
  display: block;
  width: 32px;
  height: 24px;
  border-radius: 6px;
  background-color: rgba(255, 255, 255, 0.45);
}

.cc-icon {
  display: block;
  width: 44px;
  height: 44px;
  margin-left: -3px;
}

.cc-number {
  font-size: 27px;
  line-height: 40px;
  letter-spacing: 1.800px;
}

.cc-name {
  margin-top: 7px;
  font-size: 18px;
  line-height: 28px;
  letter-spacing: 0.400px;
  opacity: 0.8;
}

.cc-date {
  margin-top: 3px;
  font-size: 18px;
  line-height: 28px;
  letter-spacing: 0.400px;
  opacity: 0.8;
}

.card-back {
  height: 37px;
  margin: 0 24px;
  background-color: #a3c0ff;
  border-radius: 0 0 22px 22px;
}

.card-dots {
  margin-top: 34px;
  gap: 12px;
}

.credit-row {
  display: flex;
  justify-content: space-between;
  padding-right: 2px;
  font-size: 24px;
  line-height: 28px;
  color: #6b7280;
  margin-top: 12px;
  padding-top: 2px;
}

.credit-row b {
  font-weight: 500;
  color: #111827;
}

.credit-row.first {
  margin-top: 28px;
}

.credit-row.divided {
  margin-top: 13px;
  padding-bottom: 11px;
  border-bottom: 2px solid #f3f4f6;
}

.credit-bar {
  height: 12px;
  margin-top: 11px;
}

.credit-fill {
  width: 57%;
}

/* Transactions */
.tx-card {
  height: 1616px;
  margin-top: 50px;
  padding: 48px 45px 0 46px;
}

.tx-head {
  display: flex;
  align-items: center;
  padding-bottom: 33px;
  border-bottom: 2px solid #f3f4f6;
}

.tx-head h2 {
  width: 375px;
  font-size: 34.500px;
  font-weight: 600;
  color: #0a0a0a;
  white-space: nowrap;
}

.search-tx {
  width: 510px;
  padding-left: 22px;
  gap: 12px;
  font-size: 28px;
}

.search-tx .ic-search {
  width: 36px;
  height: 36px;
}

.add-tx {
  width: 258px;
  height: 72px;
  margin-left: auto;
  font-size: 23px;
}

.tx-tools {
  display: flex;
  justify-content: space-between;
  align-items: flex-start;
  margin-top: 30px;
}

.filters {
  display: flex;
  gap: 17px;
  margin-top: 14px;
}

.filter {
  display: flex;
  align-items: center;
  gap: 10px;
  height: 71px;
  padding: 0 28px 0 30px;
  background-color: #fff;
  border: 2px solid #e5e7eb;
  border-radius: 14px;
  font-size: 28px;
  color: #4b5563;
  white-space: nowrap;
}

.filter svg {
  width: 34px;
  height: 34px;
}

.filter-more {
  gap: 8px;
  padding-right: 22px;
}

.tx-stats {
  display: flex;
  gap: 96px;
  margin-right: 2px;
}

.tx-stat {
  display: flex;
  flex-direction: column;
  align-items: flex-end;
  font-size: 24px;
  line-height: 36px;
  color: #9ca3af;
}

.tx-stat b {
  margin-top: 9px;
  font-size: 38.500px;
  line-height: 48px;
  font-weight: 600;
  color: #0a0a0a;
}

.tx-table {
  margin-top: 33px;
}

.tx-row {
  display: grid;
  grid-template-columns: 374px 412px 334px 398px 408px 256px 216px;
  align-items: center;
  height: 138px;
  padding-top: 8px;
  font-size: 25.400px;
  color: #111827;
  border-bottom: 2px solid #f9fafb;
}

.tx-header {
  height: 82px;
  padding-top: 0;
  background-color: #f9fafb;
  border-top: 2px solid #f3f4f6;
  border-bottom: 2px solid #f3f4f6;
  font-size: 24px;
  font-weight: 600;
  color: #6b7280;
}

.tx-header > div {
  margin-top: 4px;
}

.tx-header > .col-date {
  display: flex;
  align-items: center;
  justify-content: space-between;
  padding: 0 44px 0 48px;
  margin-top: 0;
}

.ic-sort {
  width: 36px;
  height: 36px;
}

.date-cell {
  margin-top: 8px;
  padding-left: 48px;
  line-height: 36px;
}

.date-cell small {
  display: block;
  font-size: 24px;
  color: #9ca3af;
}

.method {
  display: flex;
  align-items: center;
  gap: 11px;
  margin-top: 1px;
  font-size: 24px;
}

.method svg {
  width: 36px;
  height: 36px;
  margin-left: -3px;
  stroke-width: 1.800;
}

.method-cash {
  gap: 6px;
}

.method-cash svg {
  width: 30px;
  height: 30px;
  margin-left: -6px;
}

.pct {
  display: flex;
  align-items: center;
  gap: 24px;
}

.track {
  width: 200px;
  height: 18px;
  background-color: #f3f4f6;
  border-radius: 9px;
  overflow: hidden;
}

.track-wide {
  width: 211px;
  margin-right: -8px;
}

.track-fill {
  height: 100%;
  border-radius: 9px;
}

.track-fill.red { background-color: #ff2d3a; }
.track-fill.amber { background-color: #f0b000; }
.track-fill.gray { background-color: #d1d5db; }

.pct-badge {
  height: 48px;
  padding: 0 16px;
  line-height: 48px;
  border-radius: 10px;
  font-size: 24px;
}

.pct-badge.bad {
  background-color: #fef2f2;
  color: #dc2626;
}

.pct-badge.good {
  background-color: #f0fdf4;
  color: #16a34a;
}

.pct-badge.warn {
  background-color: #fdf3d7;
  color: #8f6a10;
}

.tx-amount {
  margin-top: -1px;
  font-weight: 600;
}

.actions {
  padding-left: 4px;
}

.tx-foot {
  display: flex;
  align-items: center;
  height: 112px;
  padding: 4px 0 0 525px;
  font-size: 24px;
}

.showing {
  width: 274px;
  white-space: nowrap;
}

.pagination {
  display: flex;
  align-items: center;
  gap: 7px;
  margin-left: 110px;
  color: #4b4d63;
  font-size: 26px;
}

.pagination svg {
  width: 28px;
  height: 28px;
}

.pg {
  display: flex;
  align-items: center;
  justify-content: center;
  width: 64px;
  height: 64px;
}

.pg.active {
  background-color: #4b4d63;
  color: #fff;
  border-radius: 12px;
}

.pg.muted {
  color: #9a9cad;
}

.pg-last {
  margin-left: -6px;
}

.pg-prev {
  display: flex;
  align-items: center;
  gap: 10px;
  margin-right: 27px;
  color: #b8bacb;
}

.pg-next {
  display: flex;
  align-items: center;
  gap: 14px;
  margin-left: 27px;
}

.per-page {
  width: 258px;
  height: 72px;
  margin-left: 101px;
  padding: 0 29px 0 30px;
  font-size: 26px;
  border-width: 3px;
  border-color: #babccb;
}
```
